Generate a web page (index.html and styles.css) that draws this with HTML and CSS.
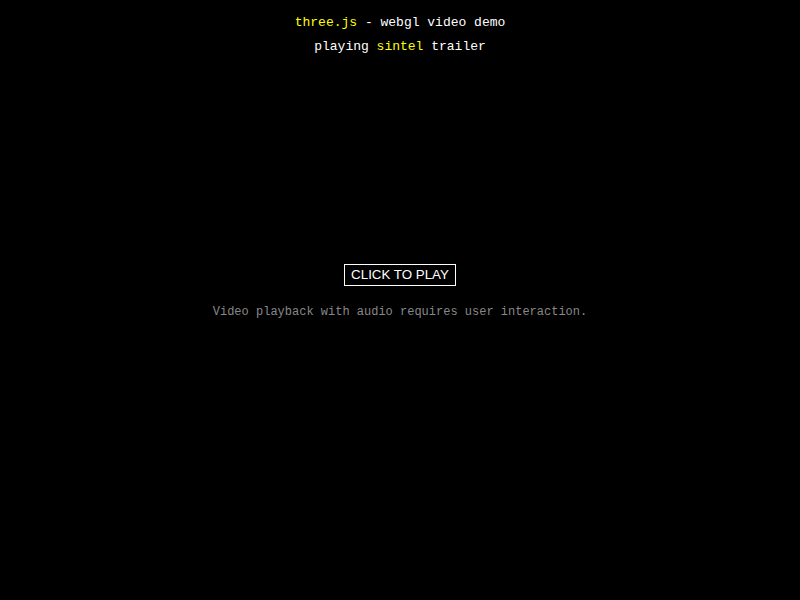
FILE: index.html
```html
<!DOCTYPE html>
<html>
<head>
<meta charset="utf-8">
<link rel="stylesheet" href="styles.css">
</head>
<body>
<div class="info">
<a class="link" href="#">three.js</a> - webgl video demo<br>
playing <a class="link" href="#">sintel</a> trailer
</div>
<div class="overlay">
<div class="box">
<button class="play">CLICK TO PLAY</button>
<p class="note">Video playback with audio requires user interaction.</p>
</div>
</div>
</body>
</html>
```
FILE: styles.css
```css
html, body {
  margin: 0;
  height: 100%;
}
body {
  background: #000;
  color: #fff;
  font-family: "Liberation Mono", monospace;
  font-size: 13px;
  line-height: 24px;
  position: relative;
  overflow: hidden;
}
.info {
  position: absolute;
  top: 0;
  left: 0;
  width: 100%;
  box-sizing: border-box;
  padding: 11px 10px 10px;
  text-align: center;
}
.link {
  color: #ff0;
  text-decoration: none;
}
.overlay {
  height: 100%;
  display: flex;
  align-items: center;
  justify-content: center;
}
.box {
  display: flex;
  flex-direction: column;
  align-items: center;
}
.play {
  background: #000;
  color: #fff;
  border: 1px solid #fff;
  border-radius: 0;
  font-family: "Liberation Sans", Arial, sans-serif;
  font-size: 13.33px;
  line-height: 16px;
  height: 22px;
  padding: 2px 6px;
  box-sizing: border-box;
}
.note {
  color: #888;
  font-size: 12px;
  line-height: 24px;
  margin: 14px 0 12px;
}
```
